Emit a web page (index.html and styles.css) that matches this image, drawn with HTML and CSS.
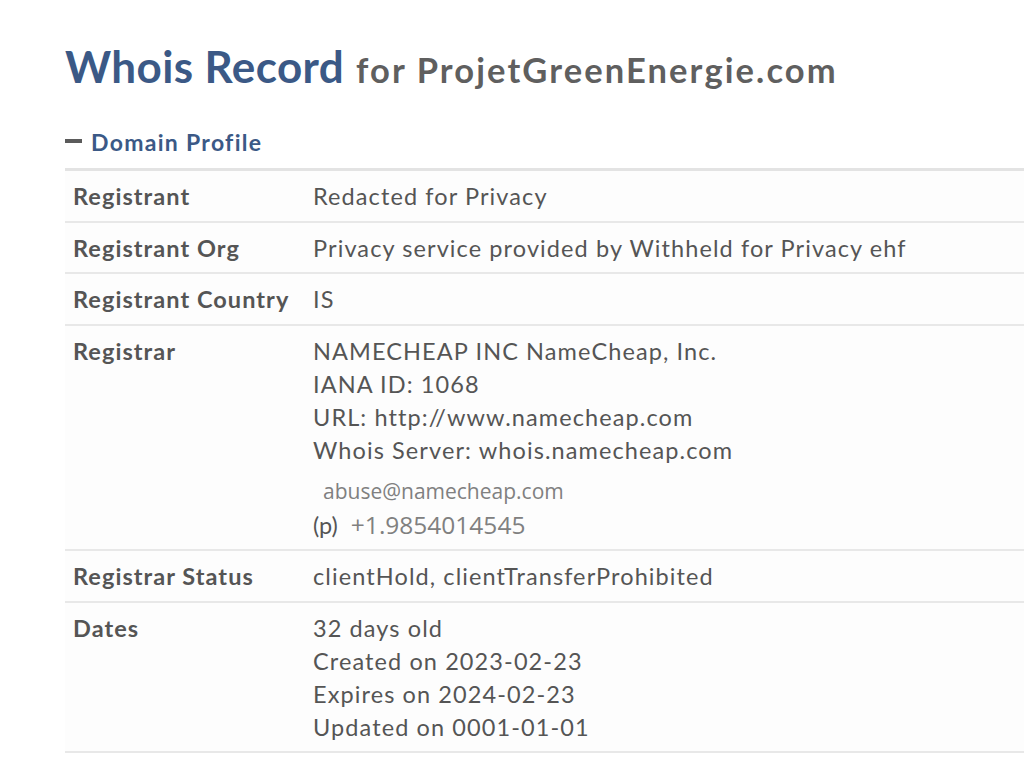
FILE: index.html
```html
<!DOCTYPE html>
<html>
<head>
<meta charset="utf-8">
<link rel="stylesheet" href="styles.css">
</head>
<body>
<div class="page">
  <h1 class="title"><span class="title-main">Whois Record</span> <span class="title-sub">for ProjetGreenEnergie.com</span></h1>
  <div class="section-head"><span class="minus"></span><span class="section-name">Domain Profile</span></div>
  <div class="table">
    <div class="row">
      <div class="label">Registrant</div>
      <div class="value">Redacted for Privacy</div>
    </div>
    <div class="row">
      <div class="label">Registrant Org</div>
      <div class="value">Privacy service provided by Withheld for Privacy ehf</div>
    </div>
    <div class="row">
      <div class="label">Registrant Country</div>
      <div class="value">IS</div>
    </div>
    <div class="row">
      <div class="label">Registrar</div>
      <div class="value">
        <div class="line">NAMECHEAP INC NameCheap, Inc.</div>
        <div class="line">IANA ID: 1068</div>
        <div class="line">URL: http://www.namecheap.com</div>
        <div class="line">Whois Server: whois.namecheap.com</div>
        <div class="line email-line"><span class="img-text email">abuse@namecheap.com</span></div>
        <div class="line phone-line"><span class="p">(p)</span><span class="img-text phone">+1.9854014545</span></div>
      </div>
    </div>
    <div class="row">
      <div class="label">Registrar Status</div>
      <div class="value">clientHold, clientTransferProhibited</div>
    </div>
    <div class="row">
      <div class="label">Dates</div>
      <div class="value">
        <div class="line">32 days old</div>
        <div class="line">Created on 2023-02-23</div>
        <div class="line">Expires on 2024-02-23</div>
        <div class="line">Updated on 0001-01-01</div>
      </div>
    </div>
  </div>
</div>
</body>
</html>
```
FILE: styles.css
```css
html, body {
  margin: 0;
  padding: 0;
  background: #ffffff;
}
body {
  font-family: Lato, "Open Sans", sans-serif;
  color: #555;
}
.page {
  padding: 36px 0 0 65px;
}
.title {
  margin: 0;
  font-weight: 700;
  line-height: 60px;
  white-space: nowrap;
}
.title-main {
  font-size: 44px;
  color: #3b5986;
  letter-spacing: 0.4px;
}
.title-sub {
  font-size: 34.5px;
  color: #5f5f5f;
  letter-spacing: 2.1px;
  margin-left: 4px;
}
.section-head {
  display: flex;
  align-items: center;
  margin-top: 24px;
  height: 34px;
}
.minus {
  display: block;
  width: 17px;
  height: 4px;
  background: #5b5b5b;
  margin-right: 9px;
  margin-top: -3px;
}
.section-name {
  font-size: 23px;
  font-weight: 700;
  color: #3b5986;
  letter-spacing: 1.3px;
}
.table {
  margin-top: 9px;
  border-top: 3px solid #e3e3e3;
  background: #fdfdfd;
}
.row {
  display: flex;
  border-bottom: 2px solid #e8e8e8;
  padding: 9px 0 7.5px;
  font-size: 23.5px;
  line-height: 33px;
}
.label {
  width: 240px;
  padding-left: 8px;
  font-weight: 700;
  color: #555;
  letter-spacing: 1.05px;
  flex: none;
}
.value {
  color: #555;
  letter-spacing: 1.1px;
  white-space: nowrap;
}
.email-line {
  margin-top: 7px;
}
.img-text {
  font-family: "Open Sans", sans-serif;
  color: #808080;
  letter-spacing: 0;
}
.email {
  font-size: 21px;
  margin-left: 10px;
}
.p {
  color: #555;
  letter-spacing: 0;
  margin-right: 13px;
}
.phone {
  font-size: 24.5px;
}
```
